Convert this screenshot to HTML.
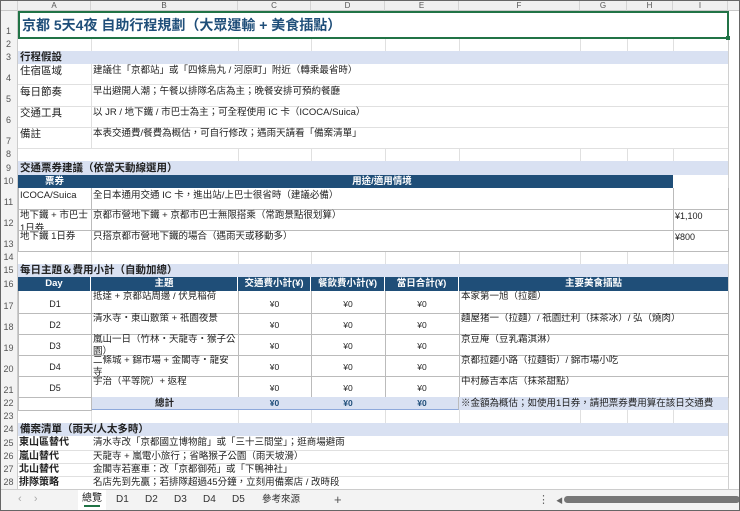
<!DOCTYPE html>
<html><head><meta charset="utf-8"><style>
*{margin:0;padding:0;box-sizing:border-box}
body{width:740px;height:511px;overflow:hidden;background:#fff;font-family:"Liberation Sans","Noto Sans CJK TC",sans-serif;font-size:10px;color:#222;position:relative}
.a{position:absolute;white-space:nowrap;overflow:hidden}
.hl{position:absolute;height:1px;background:#e0e0e0}
.vl{position:absolute;width:1px;background:#e0e0e0}
.rh{position:absolute;left:0;width:18px;text-align:center;color:#555;font-size:9px;background:#f3f3f3;border-right:1px solid #ccc}
.ch{position:absolute;top:0;height:11px;text-align:center;color:#555;font-size:8px;line-height:11px;background:#f0f0f0;border-right:1px solid #d4d4d4;border-bottom:1px solid #c8c8c8}
.sec{background:#d9e1f2;font-weight:bold;font-size:10.5px;color:#222;padding-left:2px}
.dk{background:#1f4e78;color:#fff;font-weight:bold;text-align:center;font-size:9.5px}
.bx{border-right:1px solid #bbb;border-bottom:1px solid #bbb}
.c{text-align:center}
</style></head><body>
<div class="a" style="left:0;top:0;width:740px;height:511px;border:1px solid #666;z-index:9;pointer-events:none"></div>
<div class="ch" style="left:0;width:18px"></div>
<div class="ch" style="left:18px;width:73px">A</div>
<div class="ch" style="left:91px;width:147px">B</div>
<div class="ch" style="left:238px;width:73px">C</div>
<div class="ch" style="left:311px;width:74px">D</div>
<div class="ch" style="left:385px;width:74px">E</div>
<div class="ch" style="left:459px;width:121px">F</div>
<div class="ch" style="left:580px;width:47px">G</div>
<div class="ch" style="left:627px;width:46px">H</div>
<div class="ch" style="left:673px;width:55px">I</div>
<div class="ch" style="left:728px;width:12px;border-right:none"></div>
<div class="rh" style="top:11px;height:27px;line-height:40px">1</div>
<div class="rh" style="top:38px;height:13px;line-height:13px">2</div>
<div class="rh" style="top:51px;height:13px;line-height:13px">3</div>
<div class="rh" style="top:64px;height:20px;line-height:28px">4</div>
<div class="rh" style="top:84px;height:22px;line-height:30px">5</div>
<div class="rh" style="top:106px;height:21px;line-height:28px">6</div>
<div class="rh" style="top:127px;height:21px;line-height:28px">7</div>
<div class="rh" style="top:148px;height:13px;line-height:13px">8</div>
<div class="rh" style="top:161px;height:14px;line-height:14px">9</div>
<div class="rh" style="top:175px;height:13px;line-height:13px">10</div>
<div class="rh" style="top:188px;height:21px;line-height:28px">11</div>
<div class="rh" style="top:209px;height:21px;line-height:28px">12</div>
<div class="rh" style="top:230px;height:21px;line-height:28px">13</div>
<div class="rh" style="top:251px;height:13px;line-height:13px">14</div>
<div class="rh" style="top:264px;height:13px;line-height:13px">15</div>
<div class="rh" style="top:277px;height:14px;line-height:14px">16</div>
<div class="rh" style="top:291px;height:22px;line-height:30px">17</div>
<div class="rh" style="top:313px;height:21px;line-height:28px">18</div>
<div class="rh" style="top:334px;height:21px;line-height:28px">19</div>
<div class="rh" style="top:355px;height:21px;line-height:28px">20</div>
<div class="rh" style="top:376px;height:21px;line-height:28px">21</div>
<div class="rh" style="top:397px;height:13px;line-height:13px">22</div>
<div class="rh" style="top:410px;height:13px;line-height:13px">23</div>
<div class="rh" style="top:423px;height:13px;line-height:13px">24</div>
<div class="rh" style="top:436px;height:14px;line-height:14px">25</div>
<div class="rh" style="top:450px;height:13px;line-height:13px">26</div>
<div class="rh" style="top:463px;height:13px;line-height:13px">27</div>
<div class="rh" style="top:476px;height:13px;line-height:13px">28</div>
<div class="hl" style="left:18px;top:51px;width:710px"></div>
<div class="hl" style="left:18px;top:84px;width:710px"></div>
<div class="hl" style="left:18px;top:106px;width:710px"></div>
<div class="hl" style="left:18px;top:127px;width:710px"></div>
<div class="hl" style="left:18px;top:148px;width:710px"></div>
<div class="hl" style="left:18px;top:161px;width:710px"></div>
<div class="hl" style="left:18px;top:264px;width:710px"></div>
<div class="hl" style="left:18px;top:423px;width:710px"></div>
<div class="hl" style="left:18px;top:450px;width:710px"></div>
<div class="hl" style="left:18px;top:463px;width:710px"></div>
<div class="hl" style="left:18px;top:476px;width:710px"></div>
<div class="hl" style="left:18px;top:489px;width:710px"></div>
<div class="vl" style="left:91px;top:38px;height:110px"></div>
<div class="vl" style="left:238px;top:38px;height:13px"></div><div class="vl" style="left:311px;top:38px;height:13px"></div><div class="vl" style="left:385px;top:38px;height:13px"></div><div class="vl" style="left:459px;top:38px;height:13px"></div><div class="vl" style="left:580px;top:38px;height:13px"></div><div class="vl" style="left:627px;top:38px;height:13px"></div><div class="vl" style="left:673px;top:38px;height:13px"></div>
<div class="vl" style="left:238px;top:148px;height:13px"></div><div class="vl" style="left:311px;top:148px;height:13px"></div><div class="vl" style="left:385px;top:148px;height:13px"></div><div class="vl" style="left:459px;top:148px;height:13px"></div><div class="vl" style="left:580px;top:148px;height:13px"></div><div class="vl" style="left:627px;top:148px;height:13px"></div><div class="vl" style="left:673px;top:148px;height:13px"></div>
<div class="vl" style="left:91px;top:251px;height:13px"></div><div class="vl" style="left:238px;top:251px;height:13px"></div><div class="vl" style="left:311px;top:251px;height:13px"></div><div class="vl" style="left:385px;top:251px;height:13px"></div><div class="vl" style="left:459px;top:251px;height:13px"></div><div class="vl" style="left:580px;top:251px;height:13px"></div><div class="vl" style="left:627px;top:251px;height:13px"></div><div class="vl" style="left:673px;top:251px;height:13px"></div>
<div class="vl" style="left:91px;top:410px;height:13px"></div><div class="vl" style="left:238px;top:410px;height:13px"></div><div class="vl" style="left:311px;top:410px;height:13px"></div><div class="vl" style="left:385px;top:410px;height:13px"></div><div class="vl" style="left:459px;top:410px;height:13px"></div><div class="vl" style="left:580px;top:410px;height:13px"></div><div class="vl" style="left:627px;top:410px;height:13px"></div><div class="vl" style="left:673px;top:410px;height:13px"></div>
<div class="vl" style="left:728px;top:11px;height:478px;background:#d0d0d0"></div>
<div class="a" style="left:18px;top:11px;width:711px;height:28px;border:2px solid #217346;font-size:14px;font-weight:bold;color:#1f4e79;line-height:24px;padding-left:2px">京都 5天4夜 自助行程規劃（大眾運輸 + 美食插點）</div>
<div class="a" style="left:726px;top:36px;width:4px;height:4px;background:#217346"></div>
<div class="a sec" style="left:18px;top:51px;width:710px;height:13px;line-height:13px">行程假設</div>
<div class="a" style="left:20px;top:64px;font-size:10.5px;line-height:14px">住宿區域</div>
<div class="a" style="left:93px;top:64px;line-height:14px;font-size:9.5px">建議住「京都站」或「四條烏丸 / 河原町」附近（轉乘最省時）</div>
<div class="a" style="left:20px;top:85px;font-size:10.5px;line-height:14px">每日節奏</div>
<div class="a" style="left:93px;top:85px;line-height:14px;font-size:9.5px">早出避開人潮；午餐以排隊名店為主；晚餐安排可預約餐廳</div>
<div class="a" style="left:20px;top:106px;font-size:10.5px;line-height:14px">交通工具</div>
<div class="a" style="left:93px;top:106px;line-height:14px;font-size:9.5px">以 JR / 地下鐵 / 市巴士為主；可全程使用 IC 卡（ICOCA/Suica）</div>
<div class="a" style="left:20px;top:127px;font-size:10.5px;line-height:14px">備註</div>
<div class="a" style="left:93px;top:127px;line-height:14px;font-size:9.5px">本表交通費/餐費為概估，可自行修改；遇雨天請看「備案清單」</div>
<div class="a sec" style="left:18px;top:161px;width:710px;height:14px;line-height:14px">交通票券建議（依當天動線選用）</div>
<div class="a dk" style="left:18px;top:175px;width:73px;height:13px;line-height:13px">票券</div>
<div class="a dk" style="left:91px;top:175px;width:582px;height:13px;line-height:13px">用途/適用情境</div>
<div class="a bx" style="left:18px;top:188px;width:74px;height:22px;border-left:1px solid #bbb"></div>
<div class="a bx" style="left:91px;top:188px;width:583px;height:22px"></div>
<div class="a bx" style="left:673px;top:188px;width:56px;height:22px"></div>
<div class="a bx" style="left:18px;top:209px;width:74px;height:22px;border-left:1px solid #bbb"></div>
<div class="a bx" style="left:91px;top:209px;width:583px;height:22px"></div>
<div class="a bx" style="left:673px;top:209px;width:56px;height:22px"></div>
<div class="a bx" style="left:18px;top:230px;width:74px;height:22px;border-left:1px solid #bbb"></div>
<div class="a bx" style="left:91px;top:230px;width:583px;height:22px"></div>
<div class="a bx" style="left:673px;top:230px;width:56px;height:22px"></div>
<div class="a" style="left:20px;top:189px;font-size:9.5px;line-height:13px">ICOCA/Suica</div>
<div class="a" style="left:93px;top:189px;font-size:9.5px;line-height:13px">全日本通用交通 IC 卡，進出站/上巴士很省時（建議必備）</div>
<div class="a" style="left:20px;top:209px;font-size:9.5px;line-height:13px;height:21px;white-space:normal;width:72px">地下鐵 + 市巴士 1日券</div>
<div class="a" style="left:93px;top:209px;font-size:9.5px;line-height:13px">京都市營地下鐵 + 京都市巴士無限搭乘（常跑景點很划算）</div>
<div class="a" style="left:675px;top:210px;font-size:9px;line-height:13px">¥1,100</div>
<div class="a" style="left:20px;top:230px;font-size:9.5px;line-height:13px">地下鐵 1日券</div>
<div class="a" style="left:93px;top:230px;font-size:9.5px;line-height:13px">只搭京都市營地下鐵的場合（遇雨天或移動多）</div>
<div class="a" style="left:675px;top:231px;font-size:9px;line-height:13px">¥800</div>
<div class="a sec" style="left:18px;top:264px;width:710px;height:13px;line-height:13px">每日主題＆費用小計（自動加總）</div>
<div class="a dk" style="left:18px;top:277px;width:73px;height:14px;line-height:14px;border-right:1px solid #fff">Day</div>
<div class="a dk" style="left:91px;top:277px;width:147px;height:14px;line-height:14px;border-right:1px solid #fff">主題</div>
<div class="a dk" style="left:238px;top:277px;width:73px;height:14px;line-height:14px;border-right:1px solid #fff">交通費小計(¥)</div>
<div class="a dk" style="left:311px;top:277px;width:74px;height:14px;line-height:14px;border-right:1px solid #fff">餐飲費小計(¥)</div>
<div class="a dk" style="left:385px;top:277px;width:74px;height:14px;line-height:14px;border-right:1px solid #fff">當日合計(¥)</div>
<div class="a dk" style="left:459px;top:277px;width:269px;height:14px;line-height:14px">主要美食插點</div>
<div id="days"></div>
<div class="a sec" style="left:91px;top:397px;width:368px;height:13px;border-right:1px solid #bbb;border-bottom:1px solid #8ea9db"></div>
<div class="a bx" style="left:18px;top:397px;width:74px;height:14px;border-left:1px solid #bbb"></div>
<div class="a" style="left:91px;top:397px;width:147px;text-align:center;font-weight:bold;line-height:13px;font-size:9.5px">總計</div>
<div class="a" style="left:238px;top:397px;width:73px;text-align:center;color:#1f4e79;font-weight:bold;font-size:8.5px;line-height:13px">¥0</div>
<div class="a" style="left:311px;top:397px;width:74px;text-align:center;color:#1f4e79;font-weight:bold;font-size:8.5px;line-height:13px">¥0</div>
<div class="a" style="left:385px;top:397px;width:74px;text-align:center;color:#1f4e79;font-weight:bold;font-size:8.5px;line-height:13px">¥0</div>
<div class="a" style="left:459px;top:397px;width:269px;height:13px;background:#d9e1f2;padding-left:2px;line-height:13px;font-size:9.5px">※金額為概估；如使用1日券，請把票券費用算在該日交通費</div>
<div class="a sec" style="left:18px;top:423px;width:710px;height:13px;line-height:13px">備案清單（雨天/人太多時）</div>
<div class="a" style="left:19px;top:436px;font-weight:bold;font-size:10px;line-height:14px">東山區替代</div>
<div class="a" style="left:93px;top:436px;font-size:9.5px;line-height:14px">清水寺改「京都國立博物館」或「三十三間堂」；逛商場避雨</div>
<div class="a" style="left:19px;top:450px;font-weight:bold;font-size:10px;line-height:13px">嵐山替代</div>
<div class="a" style="left:93px;top:450px;font-size:9.5px;line-height:13px">天龍寺 + 嵐電小旅行；省略猴子公園（雨天坡滑）</div>
<div class="a" style="left:19px;top:463px;font-weight:bold;font-size:10px;line-height:13px">北山替代</div>
<div class="a" style="left:93px;top:463px;font-size:9.5px;line-height:13px">金閣寺若塞車：改「京都御苑」或「下鴨神社」</div>
<div class="a" style="left:19px;top:476px;font-weight:bold;font-size:10px;line-height:13px">排隊策略</div>
<div class="a" style="left:93px;top:476px;font-size:9.5px;line-height:13px">名店先到先贏；若排隊超過45分鐘，立刻用備案店 / 改時段</div>
<div class="a" style="left:0;top:489px;width:740px;height:22px;background:#f3f3f3;border-top:1px solid #ccc"></div>
<div class="a" style="left:18px;top:493px;color:#aaa;font-size:11px">‹&nbsp;&nbsp;&nbsp;&nbsp;›</div>
<div class="a" style="left:78px;top:490px;width:28px;height:20px;background:#fff;text-align:center;line-height:18px;font-size:10px">總覽</div>
<div class="a" style="left:84px;top:505px;width:16px;height:2px;background:#217346"></div>
<div class="a" style="left:116px;top:490px;font-size:10px;line-height:20px;color:#333">D1</div>
<div class="a" style="left:145px;top:490px;font-size:10px;line-height:20px;color:#333">D2</div>
<div class="a" style="left:174px;top:490px;font-size:10px;line-height:20px;color:#333">D3</div>
<div class="a" style="left:203px;top:490px;font-size:10px;line-height:20px;color:#333">D4</div>
<div class="a" style="left:232px;top:490px;font-size:10px;line-height:20px;color:#333">D5</div>
<div class="a" style="left:262px;top:490px;font-size:9.5px;line-height:20px;color:#333">參考來源</div>
<div class="a" style="left:334px;top:490px;font-size:13px;line-height:20px;color:#555">+</div>
<div class="a" style="left:538px;top:490px;font-size:11px;line-height:20px;color:#666">⋮</div>
<div class="a" style="left:556px;top:496px;font-size:7px;color:#666">◀</div>
<div class="a" style="left:564px;top:496px;width:176px;height:7px;background:#777;border-radius:4px"></div>
<script>
var d=[["D1","抵達 + 京都站周邊 / 伏見稲荷","本家第一旭（拉麵）",291,22],
["D2","清水寺・東山散策 + 祇園夜景","麵屋猪一（拉麵）/ 祇園辻利（抹茶冰）/ 弘（燒肉）",313,21],
["D3","嵐山一日（竹林・天龍寺・猴子公園）","京豆庵（豆乳霜淇淋）",334,21],
["D4","二條城 + 錦市場 + 金閣寺・龍安寺","京都拉麵小路（拉麵街）/ 錦市場小吃",355,21],
["D5","宇治（平等院）+ 返程","中村藤吉本店（抹茶甜點）",376,21]];
var h="";
d.forEach(function(r){var t=r[3],H=r[4];
h+='<div class="a bx" style="left:18px;top:'+t+'px;width:74px;height:'+(H+1)+'px;border-left:1px solid #bbb;text-align:center;line-height:'+(H+4)+'px;font-size:9px">'+r[0]+'</div>';
h+='<div class="a bx" style="left:91px;top:'+t+'px;width:148px;height:'+(H+1)+'px;white-space:normal;padding-left:2px;line-height:12px;font-size:9.5px">'+r[1]+'</div>';
for(var i=0;i<3;i++){var x=[238,311,385][i],w=[73,74,74][i];
h+='<div class="a bx" style="left:'+x+'px;top:'+t+'px;width:'+(w+1)+'px;height:'+(H+1)+'px;text-align:center;line-height:'+(H+4)+'px;font-size:8.5px">¥0</div>';}
h+='<div class="a bx" style="left:459px;top:'+t+'px;width:270px;height:'+(H+1)+'px;padding-left:2px;line-height:12px;font-size:9.5px">'+r[2]+'</div>';});
document.getElementById("days").outerHTML=h;
</script>
</body></html>
